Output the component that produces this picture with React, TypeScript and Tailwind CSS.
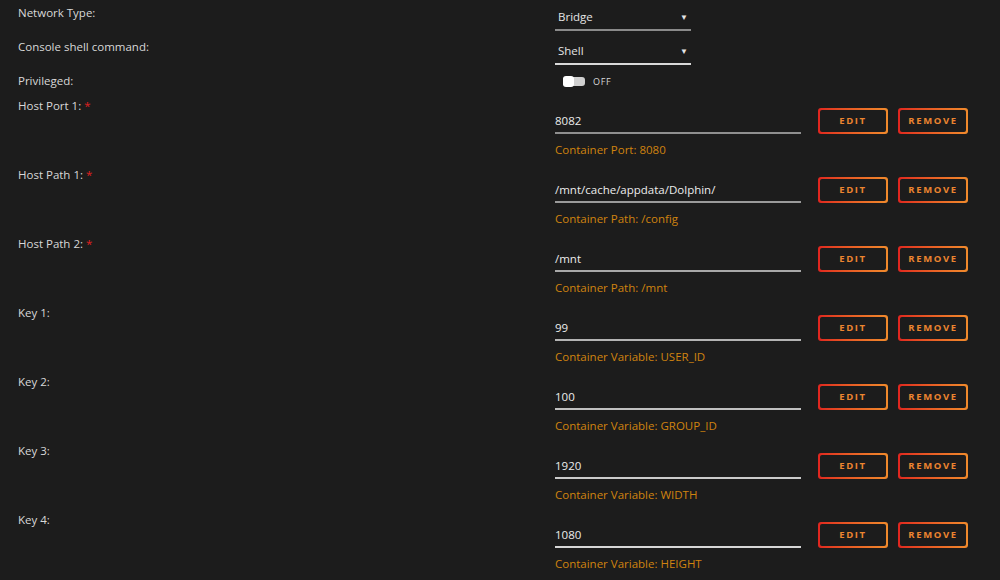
import React from 'react';

type Mapping = {
  label: string;
  value: string;
  note: string;
  line: string;
};

const mappings: Mapping[] = [
  { label: 'Host Port 1:', value: '8082', note: 'Container Port: 8080', line: 'border-[#8f8f8f]' },
  { label: 'Host Path 1:', value: '/mnt/cache/appdata/Dolphin/', note: 'Container Path: /config', line: 'border-[#9a9a9a]' },
  { label: 'Host Path 2:', value: '/mnt', note: 'Container Path: /mnt', line: 'border-[#a8a8a8]' },
  { label: 'Key 1:', value: '99', note: 'Container Variable: USER_ID', line: 'border-[#b4b4b4]' },
  { label: 'Key 2:', value: '100', note: 'Container Variable: GROUP_ID', line: 'border-[#c0c0c0]' },
  { label: 'Key 3:', value: '1920', note: 'Container Variable: WIDTH', line: 'border-[#cbcbcb]' },
  { label: 'Key 4:', value: '1080', note: 'Container Variable: HEIGHT', line: 'border-[#d6d6d6]' },
];

function OutlineButton({ children }: { children: React.ReactNode }) {
  return (
    <div className="w-[70px] h-[26px] rounded-[3px] p-[2px] bg-linear-to-r from-[#e0241f] to-[#f08a2c]">
      <div className="w-full h-full rounded-[2px] bg-[#1c1c1c] flex items-center justify-center text-[9.5px] font-bold tracking-[0.17em] text-[#ec8530]">
        {children}
      </div>
    </div>
  );
}

function Select({ value, line }: { value: string; line: string }) {
  return (
    <div className={`w-[136px] flex items-center justify-between pl-[3px] pr-[3px] pt-[8px] pb-[3px] border-b-2 ${line}`}>
      <span className="text-[11.5px] leading-[18px] text-[#e4e4e4]">{value}</span>
      <span className="text-[8px] text-[#e4e4e4]">▼</span>
    </div>
  );
}

export default function App() {
  return (
    <div
      className="min-h-screen w-full bg-[#1c1c1c] text-[#d8d8d8] overflow-hidden"
      style={{ fontFamily: '"Open Sans", "Noto Sans", sans-serif' }}
    >
      {/* Basic settings */}
      <div className="grid grid-cols-[555px_1fr]">
        <div className="pl-[18px] pt-[5px] h-[34px] text-[11.5px] leading-[16px]">Network Type:</div>
        <div className="h-[34px]">
          <Select value="Bridge" line="border-[#8a8a8a]" />
        </div>

        <div className="pl-[18px] pt-[5px] h-[34px] text-[11.5px] leading-[16px]">Console shell command:</div>
        <div className="h-[34px]">
          <Select value="Shell" line="border-[#d9d9d9]" />
        </div>

        <div className="pl-[18px] pt-[5px] h-[31px] text-[11.5px] leading-[16px]">Privileged:</div>
        <div className="h-[31px] pl-[8px] pt-[8px] flex items-start gap-[8px]">
          <div className="w-[22px] h-[9px] mt-[1px] rounded-[3px] bg-[#d0d0d0] relative">
            <div className="absolute left-0 top-[-1px] w-[11px] h-[11px] rounded-[3px] bg-white" />
          </div>
          <span className="text-[9px] leading-[11px] tracking-[0.08em] text-[#d8d8d8]">OFF</span>
        </div>
      </div>

      {/* Port, path and variable mappings */}
      {mappings.map((m) => (
        <div key={m.label} className="grid grid-cols-[555px_1fr] h-[69px]">
          <div className="pl-[18px] pt-[0px] text-[11.5px] leading-[14px]">
            {m.label}
            {m.label.startsWith('Host') && <span className="text-[#e02020] ml-[3px]">*</span>}
          </div>
          <div className="pt-[9px]">
            <div className="flex items-center">
              <div className={`w-[246px] h-[25px] border-b-2 ${m.line} flex items-center`}>
                <span className="text-[11.5px] leading-[18px] text-[#ececec] mt-[1px]">{m.value}</span>
              </div>
              <div className="ml-[17px] flex gap-[10px]">
                <OutlineButton>EDIT</OutlineButton>
                <OutlineButton>REMOVE</OutlineButton>
              </div>
            </div>
            <div className="mt-[8px] text-[11.5px] leading-[16px] text-[#d0830f]">{m.note}</div>
          </div>
        </div>
      ))}
    </div>
  );
}
